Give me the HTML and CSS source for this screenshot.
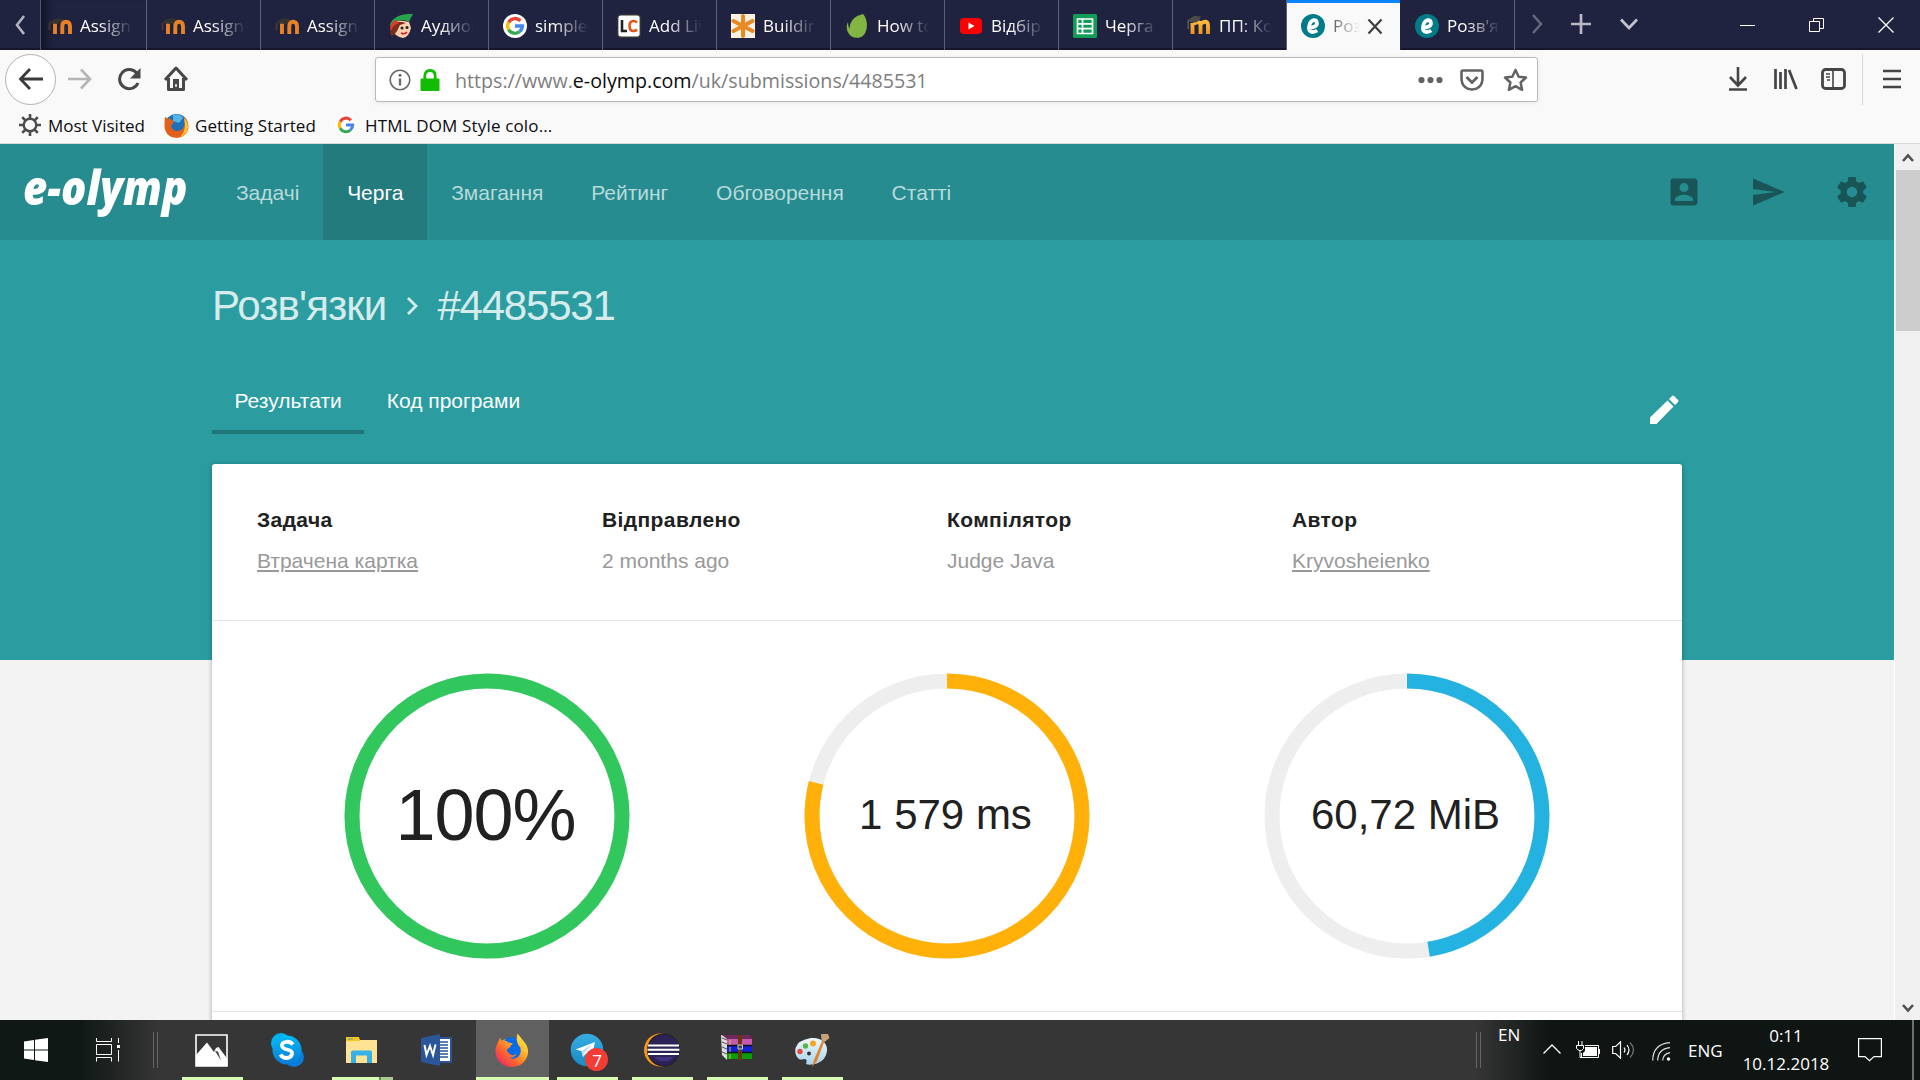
FILE: index.html
```html
<!DOCTYPE html>
<html lang="uk">
<head>
<meta charset="utf-8">
<title>e-olymp</title>
<link rel="stylesheet" href="styles.css">
</head>
<body>
<svg class="defs" aria-hidden="true">
  <defs>
    <linearGradient id="ffBody" x1="1" y1="0" x2="0.1" y2="1"><stop offset="0" stop-color="#fff44f"/><stop offset=".35" stop-color="#ffbd2e"/><stop offset=".65" stop-color="#ff6a2b"/><stop offset="1" stop-color="#e91c73"/></linearGradient>
    <linearGradient id="tgBody" x1="0" y1="0" x2="0" y2="1"><stop offset="0" stop-color="#37aee2"/><stop offset="1" stop-color="#168ac4"/></linearGradient>
    <linearGradient id="skBody" x1="0" y1="0" x2="0" y2="1"><stop offset="0" stop-color="#00baf5"/><stop offset="1" stop-color="#0a7bd8"/></linearGradient>
    <linearGradient id="mdl" x1="0" y1="0" x2="0" y2="1"><stop offset="0" stop-color="#ffb83a"/><stop offset="1" stop-color="#ef9416"/></linearGradient>
    <linearGradient id="pal" x1="0" y1="0" x2="0" y2="1"><stop offset="0" stop-color="#eff8fc"/><stop offset="1" stop-color="#a9d4ea"/></linearGradient>
  </defs>
  <symbol id="moodle" viewBox="0 0 24 24"><path d="M1.500 9v7" stroke="#6b4036" stroke-width="2" opacity=".6"/><path d="M7 8.500V20M14.300 20V12Q14.300 7.800 18 7.800T22 12V20" fill="none" stroke="#e88225" stroke-width="3.900"/><path d="M1 8 8 4.500l7 .5-2 4-5 1-5-.5z" fill="#38342f" opacity=".9"/></symbol>
  <symbol id="moodle2" viewBox="0 0 24 24"><path d="M5.500 20V9M7 9.500Q13.500 6 13.500 12V20M14 9.500Q21 5 21 12V20" fill="none" stroke="url(#mdl)" stroke-width="3.900"/><path d="M1.500 5.500 7 2l7 .5-2 4-3 2-6-.5z" fill="#4d4c4a"/><path d="M1.200 6v9" stroke="#62636b" stroke-width="1.300"/></symbol>
  <symbol id="google" viewBox="0 0 24 24"><circle cx="12" cy="12" r="12" fill="#fff"/><g fill="none" stroke-width="3.300"><path d="M17.400 6.800A7.300 7.300 0 0 0 5.600 8.400" stroke="#ea4335"/><path d="M5.600 8.400A7.300 7.300 0 0 0 5.600 15.600" stroke="#fbbc05"/><path d="M5.600 15.600A7.300 7.300 0 0 0 16.700 17.600" stroke="#34a853"/><path d="M12 12H19.300A7.300 7.300 0 0 1 16.700 17.600" stroke="#4285f4"/></g></symbol>
  <symbol id="eolymp" viewBox="0 0 24 24"><circle cx="12" cy="12" r="12" fill="#007c89"/><path d="M7.500 13.700Q16.300 13.500 15.900 8.800 15.500 6 12.800 6.200 8.800 7 8 13 7.500 18 11.500 18 14 18 16.200 16.500" fill="none" stroke="#fff" stroke-width="3.800"/></symbol>
  <symbol id="firefox" viewBox="0 0 34 34"><circle cx="17" cy="17.500" r="13.500" fill="#0a6be8"/><path d="M22.500.5Q25.500 4 28 7.500C32.500 12 33.500 17 33 20c-1.500 9-8.500 14-16 14C7.500 34 .5 27 .5 18.500.5 13 3 9.500 5.200 4.500L6.500 8Q8 6.500 10.500 6L9.500 7.500Q12 8 13.500 9.500L18 10.500Q15 12.500 15 14L11.500 17Q13 21 17.500 22.500 20 22 22 20.500 19.500 25 14.500 24.500 20 27.500 24 23 27 19 25 14 20 9 22.500.5z" fill="url(#ffBody)"/></symbol>
</svg>

<div class="screen">
  <div class="tabstrip">
    <button class="scroll-left"><svg width="12" height="24" viewBox="0 0 12 24"><path d="M10 3 3 12l7 9" fill="none" stroke="#b4b4c0" stroke-width="2.600"/></svg></button>
    <div class="tab first"><svg class="fav"><use href="#moodle"/></svg><span class="label">Assignm</span></div>
    <div class="tab"><svg class="fav"><use href="#moodle"/></svg><span class="label">Assignm</span></div>
    <div class="tab"><svg class="fav"><use href="#moodle"/></svg><span class="label">Assignm</span></div>
    <div class="tab"><svg class="fav" viewBox="0 0 24 24"><path d="M4 8Q9 5 20 8l2 6q-2 9-8 10-8-1-11-9z" fill="#ffd0b0"/><path d="M2 22Q0 15 3 8q8-1 14 1l-6 2-3 6-3 4z" fill="#7a2e1a"/><path d="M1 10Q6-1 24 0q-2 3-4 8Q9 2 2 14z" fill="#27a34a"/><path d="M1 14Q2 8 7 6l3 3q-6 2-8 8z" fill="#e03a2f"/><circle cx="13" cy="14" r="1.500" fill="#222"/><circle cx="18" cy="13.500" r="1.500" fill="#222"/><path d="M12 19q4 2 6-1" fill="none" stroke="#c22" stroke-width="1.500"/></svg><span class="label">Аудиос</span></div>
    <div class="tab"><svg class="fav"><use href="#google"/></svg><span class="label">simple</span></div>
    <div class="tab"><svg class="fav" viewBox="0 0 24 24"><rect x=".7" y=".7" width="22.600" height="22.600" rx="3" fill="#fff" stroke="#333" stroke-width="1.400"/><path d="M5 6v11h5" fill="none" stroke="#222" stroke-width="2.600"/><path d="M20 8.500Q18.500 7 16.500 7 12.500 7 12.500 12t4 5q2 0 3.500-1.500" fill="none" stroke="#e4571b" stroke-width="2.600"/></svg><span class="label">Add Liv</span></div>
    <div class="tab"><svg class="fav" viewBox="0 0 24 24"><path d="M0 0h24v24H0z" fill="#fdf1e3"/><path d="M12 2v20M2.500 7l19 10M2.500 17l19-10" stroke="#e68a23" stroke-width="4" stroke-linecap="round"/></svg><span class="label">Building</span></div>
    <div class="tab"><svg class="fav" viewBox="0 0 24 24"><path d="M18 0q3 3 4 10 0 11-7 13.500-7 1.500-11-3.500-4-6-1-12 0 4 1.500 7Q5 3 18 0z" fill="#82b541"/></svg><span class="label">How to</span></div>
    <div class="tab"><svg class="fav" viewBox="0 0 24 24"><rect x="1" y="4" width="22" height="16" rx="4" fill="#f00"/><path d="m9.500 8.500 6 3.500-6 3.500z" fill="#fff"/></svg><span class="label">Відбір</span></div>
    <div class="tab"><svg class="fav" viewBox="0 0 24 24"><rect width="24" height="24" rx="1.500" fill="#109d58"/><path d="M4.500 5h15v14.500h-15zM4.500 9.800h15M4.500 14.700h15M9.500 5v14.500" fill="none" stroke="#fff" stroke-width="1.700"/></svg><span class="label">Черга</span></div>
    <div class="tab"><svg class="fav"><use href="#moodle2"/></svg><span class="label">ПП: Ко</span></div>
    <div class="tab active"><svg class="fav"><use href="#eolymp"/></svg><span class="label">Роз</span><svg class="close" viewBox="0 0 16 16"><path d="m1.500 1 13 14m0-14-13 14" stroke="#3f3f42" stroke-width="2.200"/></svg></div>
    <div class="tab"><svg class="fav"><use href="#eolymp"/></svg><span class="label">Розв'яз</span></div>
    <div class="strip-tools">
      <svg width="12" height="20" viewBox="0 0 12 20"><path d="m2 1 8 9-8 9" fill="none" stroke="#686879" stroke-width="2.500"/></svg>
      <svg width="22" height="22" viewBox="0 0 22 22"><path d="M11 1v20M1 11h20" stroke="#b8b9c5" stroke-width="2.700"/></svg>
      <svg width="18" height="12" viewBox="0 0 18 12"><path d="m1 1.500 8 8.500 8-8.500" fill="none" stroke="#c4c4ce" stroke-width="2.700"/></svg>
    </div>
    <div class="win-controls">
      <svg width="16" height="16" viewBox="0 0 16 16"><path d="M0 8.500h15" stroke="#fff"/></svg>
      <svg width="16" height="16" viewBox="0 0 16 16"><path d="M.5 4.500h10v10H.5zM4.500 4V1.500h10v10H11" fill="none" stroke="#fff"/></svg>
      <svg width="16" height="16" viewBox="0 0 16 16"><path d="m.5.5 15 15m0-15-15 15" stroke="#fff" stroke-width="1.300"/></svg>
    </div>
  </div>

  <div class="toolbar">
    <button class="back"><svg width="26" height="24" viewBox="0 0 26 24"><path d="M25 12H2.500M12 2 2.500 12 12 22" fill="none" stroke="#3b3b3d" stroke-width="2.800"/></svg></button>
    <svg class="fwd" width="24" height="22" viewBox="0 0 24 22"><path d="M0 11h22M13 1.500l9 9.500-9 9.500" fill="none" stroke="#b5b5b5" stroke-width="2.600"/></svg>
    <svg class="reload" width="24" height="24" viewBox="0 0 24 24"><path d="M20 6.500A9.600 9.600 0 1 0 21 16" fill="none" stroke="#484849" stroke-width="3"/><path d="M23.500 1v10.500H13z" fill="#484849"/></svg>
    <svg class="home" width="24" height="26" viewBox="0 0 24 26"><path d="M1 14 12 2l11 12M4.500 12v11.500h15V12" fill="none" stroke="#48484a" stroke-width="3" stroke-linejoin="round"/><path d="M9 13h6v11H9z" fill="#48484a"/><path d="M12 18v3" stroke="#f9f9f9" stroke-width="1.500"/></svg>
    <div class="urlbar">
      <svg width="22" height="22" viewBox="0 0 22 22"><circle cx="11" cy="11" r="9.800" fill="none" stroke="#6b6b6c" stroke-width="1.600"/><path d="M11 9.500v7" stroke="#6b6b6c" stroke-width="2.400"/><circle cx="11" cy="6.300" r="1.500" fill="#6b6b6c"/></svg>
      <svg class="lock" width="20" height="22" viewBox="0 0 20 22"><path d="M1.500 9.500h17q1 0 1 1v10.500q0 1-1 1h-17q-1 0-1-1V10.500q0-1 1-1z" fill="#12bc00"/><path d="M4.800 11V7Q4.800 1.500 10 1.500T15.200 7v4" fill="none" stroke="#12bc00" stroke-width="2.800"/></svg>
      <span class="url">https://www.<b>e-olymp.com</b>/uk/submissions/4485531</span>
      <svg width="25" height="8" viewBox="0 0 25 8"><g fill="#626264"><circle cx="3.500" cy="4" r="3.100"/><circle cx="12.500" cy="4" r="3.100"/><circle cx="21.500" cy="4" r="3.100"/></g></svg>
      <svg class="pocket" width="24" height="22" viewBox="0 0 24 22"><path d="M3 1.500h18q1.500 0 1.500 1.500v6q0 6-3.500 9-3 2.500-7 2.500t-7-2.500Q1.500 15 1.500 9V3Q1.500 1.500 3 1.500z" fill="none" stroke="#636365" stroke-width="2.600"/><path d="m6.500 8 5.500 5.500L17.500 8" fill="none" stroke="#636365" stroke-width="2.800"/></svg>
      <svg class="star" width="25" height="24" viewBox="0 0 25 24"><path d="m12.500 2 3.200 6.700 7.300.8-5.400 5 1.500 7.300-6.600-3.600-6.600 3.600 1.500-7.300-5.400-5 7.300-.8z" fill="none" stroke="#636365" stroke-width="2.500" stroke-linejoin="round"/></svg>
    </div>
    <div class="right-tools">
      <svg width="20" height="24" viewBox="0 0 20 24"><path d="M10 0v18M2 10l8 8.500 8-8.500M1 22.500h18" fill="none" stroke="#454547" stroke-width="2.600"/></svg>
      <svg width="24" height="22" viewBox="0 0 24 22"><path d="M1.500 1v20M6.500 4v17M11.500 1v20M15 2l7.500 19" fill="none" stroke="#454547" stroke-width="2.700"/></svg>
      <svg class="sidebar-icon" width="25" height="22" viewBox="0 0 25 22"><rect x="1.500" y="1.500" width="22" height="19" rx="3" fill="none" stroke="#454547" stroke-width="2.800"/><path d="M12 2v18M5 6h4M5 9h4M6 12h3" stroke="#454547" stroke-width="1.600"/></svg>
    </div>
    <div class="menu"><svg width="18" height="20" viewBox="0 0 18 20"><path d="M0 2h18M0 10h18M0 18h18" stroke="#454547" stroke-width="2.700"/></svg></div>
  </div>

  <div class="bookmarks">
    <svg width="22" height="22" viewBox="0 0 22 22"><circle cx="11" cy="11" r="6.300" fill="none" stroke="#4c4c4e" stroke-width="2.400"/><path d="M11 0v5M11 17v5M0 11h5M17 11h5M3.200 3.200l3.300 3.300M15.500 15.500l3.300 3.300M3.200 18.800l3.300-3.300M15.500 6.500l3.300-3.300" stroke="#4c4c4e" stroke-width="2.600"/></svg>
    <span class="bm1">Most Visited</span>
    <svg width="25" height="25" viewBox="0 0 25 25"><circle cx="12.500" cy="12.500" r="11.500" fill="#1d6fb8"/><path d="M9 2q7-2 10 3l-4 5-6-2z" fill="#55b5e4"/><path d="M1 4Q4 6 7 6l3 3-3 4q1 5 7 5 5-1 6-5 2-5-1-10 5 3 5.500 10-.5 11-12 12Q1 24 .5 13 .5 8 1 4z" fill="#e2601b"/><path d="M20 5q4 3 4 9-1 8-8 10 5-5 5-12z" fill="#ffc42e"/></svg>
    <span class="bm2">Getting Started</span>
    <svg width="22" height="22"><use href="#google"/></svg>
    <span class="bm3">HTML DOM Style colo...</span>
  </div>

  <div class="viewport">
    <div class="page">
      <header class="site-header">
        <div class="logo"><span>e-olymp</span></div>
        <nav class="nav">
          <a>Задачі</a><a class="current">Черга</a><a>Змагання</a><a>Рейтинг</a><a>Обговорення</a><a>Статті</a>
        </nav>
        <div class="header-icons">
          <svg viewBox="0 0 24 24"><path d="M3 5v14a2 2 0 0 0 2 2h14c1.100 0 2-.9 2-2V5c0-1.100-.9-2-2-2H5a2 2 0 0 0-2 2zm12 4c0 1.660-1.340 3-3 3s-3-1.340-3-3 1.340-3 3-3 3 1.340 3 3zm-9 8c0-2 4-3.100 6-3.100s6 1.100 6 3.100v1H6v-1z"/></svg>
          <svg viewBox="0 0 24 24"><path d="M2.010 21 23 12 2.010 3 2 10l15 2-15 2z"/></svg>
          <svg viewBox="0 0 24 24"><path d="M19.430 12.980c.04-.32.070-.64.070-.98s-.03-.66-.07-.98l2.110-1.650c.19-.15.240-.42.120-.64l-2-3.460c-.12-.22-.39-.3-.61-.22l-2.490 1c-.52-.4-1.080-.73-1.690-.98l-.38-2.650C14.460 2.180 14.250 2 14 2h-4c-.25 0-.46.180-.49.420l-.38 2.650c-.61.250-1.170.590-1.690.98l-2.490-1c-.23-.09-.49 0-.61.220l-2 3.460c-.13.220-.07.490.120.640l2.110 1.650c-.04.320-.07.650-.07.980s.03.660.070.980l-2.110 1.650c-.19.150-.24.420-.12.640l2 3.460c.12.220.39.300.61.220l2.490-1c.52.400 1.080.730 1.690.980l.38 2.650c.03.240.24.420.49.420h4c.25 0 .46-.18.490-.42l.38-2.650c.61-.25 1.170-.59 1.690-.98l2.490 1c.23.090.49 0 .61-.22l2-3.460c.12-.22.070-.49-.12-.64l-2.110-1.650zM12 15.500c-1.930 0-3.500-1.570-3.500-3.500s1.570-3.500 3.500-3.500 3.500 1.570 3.500 3.500-1.570 3.500-3.500 3.500z"/></svg>
        </div>
      </header>
      <main class="container">
        <h1 class="title"><span>Розв'язки</span><svg width="12" height="18" viewBox="0 0 12 18"><path d="m2 1 8 8-8 8" fill="none" stroke="#d5ebec" stroke-width="2.800"/></svg><span class="number">#4485531</span></h1>
        <div class="tabs-row">
          <div class="tabs"><a class="on">Результати</a><a>Код програми</a></div>
          <svg class="edit" width="30" height="30" viewBox="0 0 30 30"><path d="M1 29v-6.500L18.500 5.500l6 6L7.500 29zM20 4l3-3q1-1 2 0l4 4q1 1 0 2l-3 3z" fill="#fff"/></svg>
        </div>
        <section class="card">
          <div class="info">
            <div><h2>Задача</h2><a>Втрачена картка</a></div>
            <div><h2>Відправлено</h2><p>2 months ago</p></div>
            <div><h2>Компілятор</h2><p>Judge Java</p></div>
            <div><h2>Автор</h2><a>Kryvosheienko</a></div>
          </div>
          <div class="rings">
            <div class="ring"><svg viewBox="0 0 286 286"><circle class="track" cx="143" cy="143" r="135"/><circle class="green" cx="143" cy="143" r="135"/></svg><span class="big">100%</span></div>
            <div class="ring"><svg viewBox="0 0 286 286"><circle class="track" cx="143" cy="143" r="135"/><circle class="orange" cx="143" cy="143" r="135" pathLength="100" stroke-dasharray="78.950 100"/></svg><span>1 579 ms</span></div>
            <div class="ring"><svg viewBox="0 0 286 286"><circle class="track" cx="143" cy="143" r="135"/><circle class="blue" cx="143" cy="143" r="135" pathLength="100" stroke-dasharray="47.440 100"/></svg><span>60,72 MiB</span></div>
          </div>
        </section>
      </main>
    </div>
    <div class="scrollbar">
      <svg class="up" width="12" height="9" viewBox="0 0 12 9"><path d="m1 8 5-5.500L11 8" fill="none" stroke="#505050" stroke-width="2.600"/></svg>
      <div class="thumb"></div>
      <svg class="down" width="12" height="9" viewBox="0 0 12 9"><path d="m1 1 5 5.500L11 1" fill="none" stroke="#505050" stroke-width="2.600"/></svg>
    </div>
  </div>

  <div class="taskbar">
    <svg class="start" width="24" height="24" viewBox="0 0 24 24"><path d="M0 3.500 10 2v9.500H0zM11 1.800 24 0v11.500H11zM0 12.500h10V22L0 20.500zM11 12.500h13V24l-13-1.800z" fill="#fff"/></svg>
    <svg class="taskview" width="24" height="24" viewBox="0 0 24 24"><path d="M.5 0v3.500h15V0M.5 6.500h15v10H.5zM.5 23.500V19.500h15v4M22.500 0v5M22.500 12v11.500" fill="none" stroke="#fff"/><path d="M21 7h3v3h-3z" fill="#fff"/></svg>
    <div class="handle"></div>
    <div class="apps">
      <div class="app"><svg width="33" height="33" viewBox="0 0 33 33"><path d="M1 1h31v31H1z" fill="none" stroke="#fff" stroke-width="1.600"/><path d="M1 21 12 8.500l7 9.500 2-4 2.500-1 9 12V32H1z" fill="#fff"/><path d="m20 17 6 9.500-3-9z" fill="#444"/></svg></div>
      <div class="app idle"><svg width="34" height="34" viewBox="0 0 34 34"><circle cx="11" cy="10" r="10" fill="#00b4f1"/><circle cx="24" cy="24" r="10" fill="#0a7bd8"/><circle cx="17" cy="17" r="14.500" fill="url(#skBody)"/><path d="M23 11.500Q20.500 8.500 16.500 8.800 11.500 9.500 12 13q.5 2.500 5 3.500 5.500 1 5 4.500-1 4-5.500 4-4 0-6-3.500" fill="none" stroke="#fff" stroke-width="3.800"/></svg></div>
      <div class="app multi"><svg width="33" height="27" viewBox="0 0 33 27"><path d="M1 1h12l2 2h17v23H1z" fill="#fee394"/><path d="M1 0h13l1 4H1z" fill="#fbc51c"/><path d="M3 2h5" stroke="#4aa9a5"/><path d="M6 26V15q0-1.500 1.500-1.500h18Q27 13.500 27 15v11h-5v-7.500H11V26z" fill="#38b0e8"/></svg></div>
      <div class="app idle"><svg width="33" height="32" viewBox="0 0 33 32"><path d="M18 3h13q1 0 1 1v24q0 1-1 1H18z" fill="#2a5699"/><path d="M19 5h11v22H19z" fill="#fff"/><path d="M19 8h9M19 11h9M19 14h9M19 17h9M19 20h9M19 23h9" stroke="#2a5699" stroke-width="1.500"/><path d="m1 4 19-4v32L1 28z" fill="#2b579a"/><path d="m4.500 11 2 10L10 12l3 9 2.500-10.500" fill="none" stroke="#fff" stroke-width="2"/></svg></div>
      <div class="app focused"><svg width="34" height="34"><use href="#firefox"/></svg></div>
      <div class="app"><svg class="tg" width="38" height="38" viewBox="0 0 38 38"><circle cx="17" cy="17" r="16.300" fill="url(#tgBody)"/><path d="M5.500 16.500 25 9l-3.500 15.500-5.500-4-3 3.500-1.500-6z" fill="#fff"/><path d="m11.500 18 11-7-8 9-1.500 4z" fill="#c3dceb"/><circle cx="26.500" cy="26.500" r="11.500" fill="#f23c34"/></svg><span class="badge">7</span></div>
      <div class="app"><svg width="36" height="34" viewBox="0 0 36 34"><circle cx="16.500" cy="17" r="16.500" fill="#f7941e"/><circle cx="19.500" cy="17" r="16.500" fill="#222"/><circle cx="20" cy="17" r="15.500" fill="#2c2255"/><path d="M10 24q10 9 20 0z" fill="#43307f"/><path d="M4 12.500h31M3.500 16.700h32M4 21h31" stroke="#fff" stroke-width="2"/></svg></div>
      <div class="app"><svg class="rar" width="32" height="27" viewBox="0 0 32 27"><path d="m0 1 6 1v24l-5-5z" fill="#ddd"/><path d="m1 4 5 2M1 8l5 2M1 13l5 2M1 18l5 2" stroke="#555"/><path d="M1 1h29l1 4H6z" fill="#6f2858"/><path d="M6 5h25v6H6z" fill="#c45bb0"/><path d="M6 12h25v6H6z" fill="#1220d8"/><path d="M6 19h25v6H6z" fill="#0a9d0a"/><path d="M6 11.500h25M6 18.500h25" stroke="#111" stroke-width="1.500"/><path d="M17 1h4v25h-4z" fill="#693512"/><path d="M17 11h4.500v4H17z" fill="#444" stroke="#ccc"/><path d="M9 6v5M9 13v5M9 20v5" stroke="#d7b93c"/></svg></div>
      <div class="app"><svg width="36" height="35" viewBox="0 0 36 35"><path d="M17 5C27 4 34 10 33 18q-1 9-10 12.500-7 2-11 .5 2-5-2-5-3 1-5 0-5-4-3.500-11Q4 7 17 5z" fill="url(#pal)"/><circle cx="6" cy="18.500" r="2.700" fill="#e14c3e"/><circle cx="11.500" cy="13" r="2.700" fill="#55b848"/><circle cx="19" cy="10.500" r="3" fill="#f5a623"/><circle cx="15" cy="20.500" r="2" fill="#333"/><path d="m28 8-8 19-2 7 5-6 7-19z" fill="#db8535"/><path d="m27 1 7 0 1.500 4-5 4-3-2z" fill="#c9a27c"/></svg></div>
    </div>
    <div class="tray">
      <div class="handle"></div>
      <span class="en">EN</span>
      <svg class="chev" width="18" height="10" viewBox="0 0 18 10"><path d="m.5 9.500 8.500-8.500 8.500 8.500" fill="none" stroke="#fff" stroke-width="1.300"/></svg>
      <svg class="batt" width="24" height="18" viewBox="0 0 24 18"><path d="M9 4.500h13.500v12H5.500V12" fill="none" stroke="#fff"/><path d="M9 6h12v9H7v-3l2-2zM22 8h2v5h-2z" fill="#fff"/><path d="M2.500 0v4M6 0v4M.5 4.500h7v3L5.500 9.500h-2.500L.5 7.500zM4 10v6.500h2" stroke="#fff" fill="none"/></svg>
      <svg class="vol" width="23" height="18" viewBox="0 0 23 18"><path d="M.7 5.500h3L8.500.8v16.400l-4.800-4.700h-3z" fill="none" stroke="#fff" stroke-width="1.200"/><path d="M12 6.500q2 2.500 0 5M15 4q4 5 0 10" fill="none" stroke="#fff" stroke-width="1.200"/><path d="M18 1.500q7 7.500 0 15" fill="none" stroke="#777" stroke-width="1.200"/></svg>
      <svg class="wifi" width="19" height="19" viewBox="0 0 19 19"><path d="M.7 18.500Q1 2 18 .7M5.700 18.500Q6 7 18 5.700M10.700 18.500Q11 12 18 10.700" fill="none" stroke="#ddd" stroke-width="1.200"/><circle cx="16.500" cy="17" r="1.700" fill="#fff"/></svg>
      <span class="lang">ENG</span>
      <div class="clock"><span>0:11</span><span>10.12.2018</span></div>
      <svg class="note" width="24" height="24" viewBox="0 0 24 24"><path d="M.6.600h22.800v18H16l-4.500 4.200L7 18.600H.6z" fill="none" stroke="#fff" stroke-width="1.200"/></svg>
      <div class="peek"></div>
    </div>
  </div>
</div>
</body>
</html>
```
FILE: styles.css
```css
* { box-sizing: border-box; }
body { margin: 0; overflow: hidden; }
h1, h2, p { margin: 0; font-weight: normal; }
button { border: 0; padding: 0; background: none; }
svg { display: block; flex: none; }
.defs { position: absolute; width: 0; height: 0; }

.screen {
  width: 1920px;
  height: 1080px;
  display: flex;
  flex-direction: column;
  overflow: hidden;
  font-family: "Open Sans", "Noto Sans", sans-serif;
  font-size: 17px;
}

/* Browser tab strip */
.tabstrip {
  height: 50px;
  flex: none;
  display: flex;
  background: #202340;
  box-shadow: inset 0 -2px #15162b;
}
.scroll-left {
  width: 41px;
  display: grid;
  place-items: center;
  border-right: 1px solid #55576d;
}
.tab {
  width: 114px;
  flex: none;
  display: flex;
  align-items: center;
  padding: 2px 0 0 14px;
  color: #fff;
  border-right: 1px solid #5e6074;
}
.tab.first {
  width: 106px;
  padding-left: 7px;
  box-shadow: inset 12px 0 8px -6px #15162b;
}
.fav { width: 24px; height: 24px; margin-right: 8px; }
.label {
  width: 54px;
  padding-bottom: 2px;
  overflow: hidden;
  white-space: nowrap;
  mask-image: linear-gradient(90deg, #000 35%, transparent 98%);
}
.tab.active {
  background: #f9f9fa;
  color: #0c0c0d;
  border-right-color: #202340;
  box-shadow: inset 0 3px #0a84ff;
}
.active .label {
  width: 27px;
  mask-image: linear-gradient(90deg, rgba(0, 0, 0, .65), transparent);
}
.close { width: 16px; height: 17px; margin-left: 7px; }
.strip-tools {
  display: flex;
  align-items: center;
  gap: 27px;
  padding: 0 0 2px 16px;
}
.strip-tools svg:nth-child(3) { margin-left: 1px; }
.win-controls {
  margin-left: auto;
  display: flex;
  align-items: center;
  gap: 53px;
  padding-right: 26px;
}

/* Navigation toolbar */
.toolbar {
  height: 58px;
  flex: none;
  display: flex;
  align-items: center;
  padding-left: 5px;
  background: #f9f9fa;
}
.back {
  width: 51px;
  height: 51px;
  border: 1px solid #b3b3b3;
  border-radius: 50%;
  background: #fff;
  display: grid;
  place-items: center;
}
.fwd { margin-left: 12px; }
.reload { margin-left: 25px; }
.home { margin-left: 23px; }
.urlbar {
  width: 1163px;
  height: 45px;
  margin: 1px 0 0 187px;
  display: flex;
  align-items: center;
  padding: 0 9px 0 13px;
  background: #fff;
  border: 1px solid #b9b9b9;
  border-radius: 3px;
  box-shadow: 0 1px 5px rgba(0, 0, 0, .08);
}
.lock { margin-left: 9px; }
.url {
  flex: 1;
  margin-left: 15px;
  padding-top: 1px;
  font-size: 19.65px;
  color: #7d7d7e;
}
.url b { font-weight: normal; color: #0c0c0d; }
.pocket { margin-left: 17px; }
.star { margin-left: 19px; }
.right-tools {
  display: flex;
  align-items: center;
  gap: 26px;
  margin-left: 190px;
}
.sidebar-icon { margin-left: -3px; }
.menu {
  height: 51px;
  margin-left: 16px;
  padding-left: 20px;
  display: flex;
  align-items: center;
  border-left: 1px solid #dcdcdd;
}

.bookmarks {
  height: 36px;
  flex: none;
  display: flex;
  align-items: center;
  padding: 0 0 1px 19px;
  background: #f9f9fa;
  border-bottom: 1px solid #d8d8d8;
  color: #0c0c0d;
}
.bm1 { margin: 0 17px 0 7px; width: 99px; white-space: nowrap; }
.bm2 { margin: 0 19px 0 6px; width: 121px; white-space: nowrap; letter-spacing: .05px; }
.bm3 { margin-left: 8px; letter-spacing: .15px; }

/* Page */
.viewport { height: 876px; flex: none; display: flex; }
.page {
  width: 1894px;
  overflow: hidden;
  background: linear-gradient(#2b9ca0 516px, #f3f3f3 516px);
  font-family: "Liberation Sans", Arial, sans-serif;
  font-size: 21px;
}
.site-header {
  height: 96px;
  display: flex;
  background: #268c8f;
}
.logo {
  width: 212px;
  padding: 8px 0 0 23px;
  font: italic 800 47px/1.5 "Open Sans", sans-serif;
  color: #fff;
}
.logo span {
  display: inline-block;
  transform: scaleX(.893);
  transform-origin: left;
}
.nav { display: flex; }
.nav a {
  display: flex;
  align-items: center;
  padding: 1px 23.9px 0;
  color: #b8dadb;
}
.nav .current { background: #237b7d; color: #fff; }
.header-icons {
  margin-left: auto;
  display: flex;
  align-items: center;
  gap: 48px;
  padding-right: 24px;
}
.header-icons svg { width: 36px; height: 36px; fill: #195457; }

.container { width: 1470px; margin-left: 212px; }
.title {
  height: 126px;
  display: flex;
  align-items: center;
  padding-top: 6px;
  font-size: 42px;
  letter-spacing: -.9px;
  color: #d5ebec;
}
.title svg { margin: 0 19px 0 20px; }
.number { letter-spacing: -1.2px; }
.tabs-row {
  height: 68px;
  display: flex;
  justify-content: space-between;
}
.tabs { display: flex; }
.tabs a {
  padding: 23px 22.5px 0;
  color: #fff;
  border-bottom: 4px solid transparent;
}
.tabs .on { border-bottom-color: #1f7679; }
.edit { margin: 29px 3px 0; }
.card {
  margin-top: 30px;
  height: 620px;
  background: #fff;
  border-radius: 3px;
  box-shadow: 0 1px 5px rgba(0, 0, 0, .3);
  color: #212121;
}
.info {
  height: 157px;
  display: grid;
  grid-template-columns: repeat(4, 1fr);
  padding: 42px 45px 0;
  border-bottom: 1px solid #e2e2e2;
}
.info h2 {
  font-size: 21px;
  font-weight: bold;
  line-height: 27px;
  letter-spacing: .4px;
  margin-bottom: 14px;
}
.info p, .info a { font-size: 21px; line-height: 27px; color: #999; }
.info a { text-decoration: underline; }
.rings {
  height: 391px;
  display: grid;
  grid-template-columns: repeat(3, 1fr);
  padding: 0 45px;
  place-items: center;
  border-bottom: 1px solid #e2e2e2;
}
.ring { display: grid; place-items: center; font-size: 42px; }
.ring svg, .ring span { grid-area: 1 / 1; }
.ring span { padding: 0 3px 2px 0; }
.ring svg { width: 286px; height: 286px; transform: rotate(-90deg); }
.ring circle { fill: none; stroke-width: 15px; }
.track { stroke: #eee; }
.green { stroke: #31c75d; }
.orange { stroke: #ffb109; }
.blue { stroke: #24b2e0; }
.ring .big { font-size: 72px; letter-spacing: -1px; }

.scrollbar {
  width: 26px;
  display: flex;
  flex-direction: column;
  align-items: center;
  background: #f0f0f0;
  border-left: 1px solid #fff;
}
.up { margin: 9px 0 8px; }
.thumb { width: 24px; height: 161px; background: #cdcdcd; }
.down { margin: auto 0 7px; }

/* Taskbar */
.taskbar {
  height: 60px;
  flex: none;
  display: flex;
  align-items: center;
  background: linear-gradient(90deg, #101815 0, #101815 80px, #363636 160px, #363636 1475px, #0e1513 1550px);
  color: #fff;
}
.start { margin-left: 24px; }
.taskview { margin-left: 48px; }
.handle {
  width: 5px;
  height: 36px;
  border: solid #666;
  border-width: 0 1px;
}
.taskbar > .handle { margin: 0 18px 0 33px; }
.apps { height: 60px; display: flex; gap: 2px; }
.app {
  width: 73px;
  padding-right: 2px;
  display: grid;
  place-items: center;
  background: linear-gradient(#d7fbb0, #d7fbb0) center bottom / 61px 3px no-repeat;
}
.app.idle { background: none; }
.app.multi { background: linear-gradient(90deg, #d7fbb0 47px, #718461 47px, #718461 49px, #a9cb8c 49px) center bottom / 61px 3px no-repeat; }
.app.focused { background: linear-gradient(#d7fbb0, #d7fbb0) center bottom / 73px 3px no-repeat #606060; }
.app svg, .badge { grid-area: 1 / 1; }
.rar { margin-bottom: 5px; }
.tg { margin: 4px 0 0 4px; }
.badge {
  margin: 22px 0 0 21px;
  font-size: 17px;
  line-height: 20px;
}
.tray { margin-left: auto; height: 60px; display: flex; align-items: center; }
.en { align-self: flex-start; width: 27px; margin: 5px 0 0 17px; font: 17px/20px "Open Sans", sans-serif; }
.chev { margin: 0 0 2px 18px; }
.batt { margin-left: 15px; }
.vol { margin-left: 12px; }
.wifi { margin: 3px 0 0 17px; }
.lang { width: 34px; margin: 1px 0 0 17px; }
.clock {
  width: 90px;
  margin-left: 19px;
  display: flex;
  flex-direction: column;
  align-items: center;
  line-height: 28px;
}
.note { margin-left: 27px; }
.peek { width: 2px; height: 60px; margin: 0 6px 0 30px; background: #6c706f; }
```
